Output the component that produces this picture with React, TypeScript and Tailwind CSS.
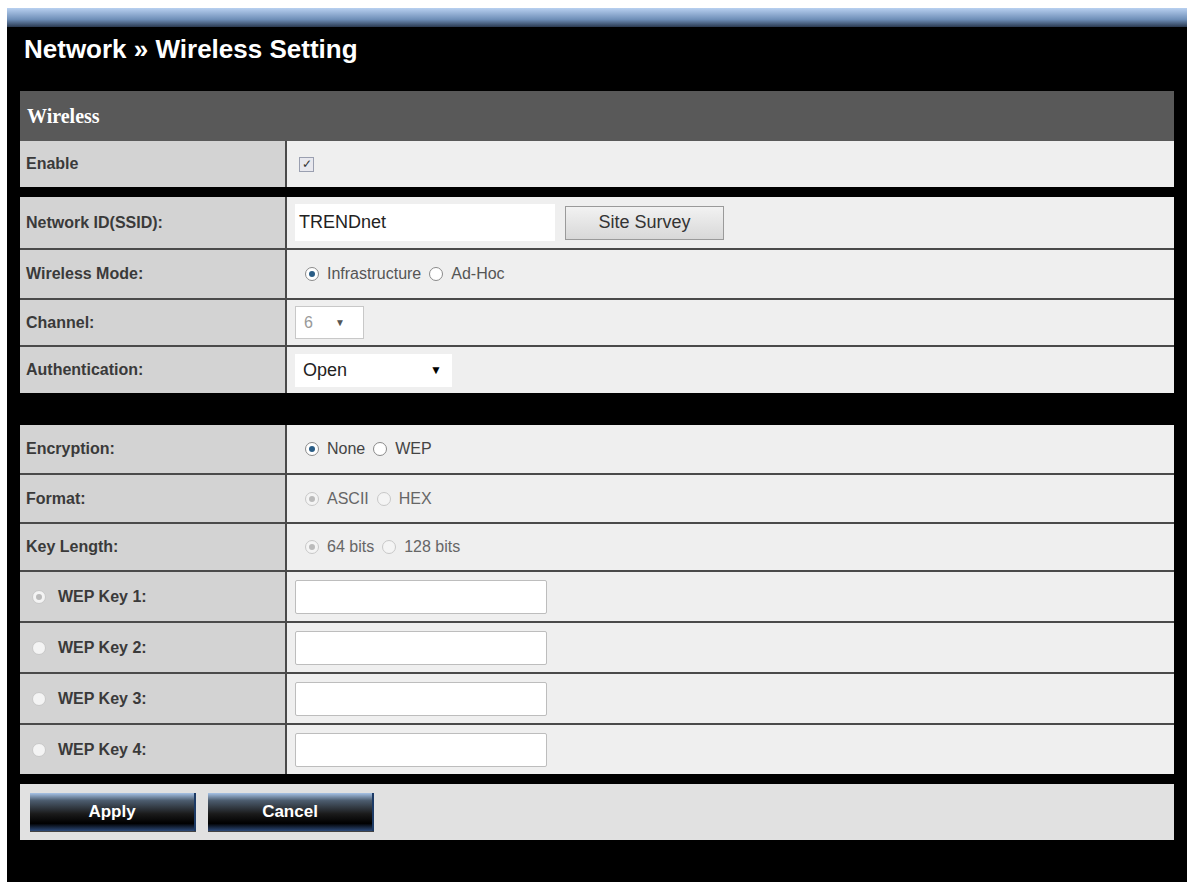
import React from "react";

const F = { fontFamily: '"Liberation Sans", Arial, sans-serif' };

function Radio({ on, dim }: { on?: boolean; dim?: boolean }) {
  return (
    <span className={`inline-flex items-center justify-center w-[14px] h-[14px] rounded-full border ${dim ? "border-[#c8c8c8] bg-[#f4f4f4]" : "border-[#8a8a8a] bg-white"}`}>
      {on && <span className={`w-[6px] h-[6px] rounded-full ${dim ? "bg-[#bbb]" : "bg-[#2a5d86]"}`} />}
    </span>
  );
}

function Row({ label, children, h, first }: { label: React.ReactNode; children?: React.ReactNode; h: number; first?: boolean }) {
  return (
    <div className={`flex ${first ? "" : "border-t-2 border-[#4a4a4a]"}`} style={{ height: h }}>
      <div className="w-[267px] bg-[#d3d3d3] border-r-2 border-[#4a4a4a] flex items-center pl-[6px] text-[16px] font-bold text-[#3a3a3a]">{label}</div>
      <div className="flex-1 bg-[#efefef] flex items-center pl-[8px] text-[16px] text-[#333]">{children}</div>
    </div>
  );
}

function Input() {
  return <div className="w-[252px] h-[34px] bg-white border border-[#bdbdbd] rounded-[2px]" />;
}

function Btn({ children }: { children: React.ReactNode }) {
  return (
    <div className="w-[166px] h-[38px] flex items-center justify-center text-white font-bold text-[17px] border-r-2 border-[#1d3b66] shadow-[0_1px_0_#444]" style={{ background: "linear-gradient(#a7c3e6 0%, #4c5c6e 20%, #1a1a1a 55%, #000 80%, #2c4a7a 100%)" }}>
      {children}
    </div>
  );
}

export default function App() {
  return (
    <div className="w-[1193px] h-[887px] bg-white pt-[8px] pl-[7px]" style={F}>
      <div className="w-[1180px] h-[874px] bg-black flex flex-col">
        <div className="h-[19px]" style={{ background: "linear-gradient(#b8d0f0, #6f8fb8 60%, #2a3950)" }} />
        <div className="h-[64px] pl-[17px] pt-[3px] text-white font-bold text-[26px]">Network » Wireless Setting</div>
        <div className="mx-[13px] flex flex-col">
          <div className="h-[50px] bg-[#595959] flex items-center pl-[7px] text-white font-bold text-[20px]" style={{ fontFamily: '"Liberation Serif", serif' }}>Wireless</div>
          <Row label="Enable" h={46} first>
            <span className="w-[15px] h-[15px] border border-[#9a9fb0] bg-[#e8e8ee] flex items-center justify-center text-[12px] text-[#333] ml-[4px]">✓</span>
          </Row>
          <div className="h-[10px] bg-black" />
          <Row label="Network ID(SSID):" h={51} first>
            <div className="w-[260px] h-[37px] bg-white flex items-center pl-[4px] text-[18px] text-[#222]">TRENDnet</div>
            <div className="ml-[10px] w-[159px] h-[34px] border border-[#9a9a9a] bg-gradient-to-b from-[#f2f2f2] to-[#d8d8d8] flex items-center justify-center text-[18px] text-[#333]">Site Survey</div>
          </Row>
          <Row label="Wireless Mode:" h={50}>
            <span className="ml-[10px] flex items-center gap-[8px] text-[#555]"><Radio on />Infrastructure <Radio /> Ad-Hoc</span>
          </Row>
          <Row label="Channel:" h={47}>
            <div className="w-[69px] h-[33px] bg-white border border-[#c8c8c8] flex items-center pl-[8px] text-[#999] gap-[22px]">6 <span className="text-[10px] text-[#555]">▼</span></div>
          </Row>
          <Row label="Authentication:" h={48}>
            <div className="w-[157px] h-[33px] bg-white flex items-center pl-[8px] text-[18px] text-[#222] justify-between pr-[10px]">Open <span className="text-[12px] text-black">▼</span></div>
          </Row>
          <div className="h-[32px] bg-black" />
          <Row label="Encryption:" h={48} first>
            <span className="ml-[10px] flex items-center gap-[8px] text-[#444]"><Radio on />None <Radio /> WEP</span>
          </Row>
          <Row label="Format:" h={49}>
            <span className="ml-[10px] flex items-center gap-[8px] text-[#666]"><Radio on dim />ASCII <Radio dim /> HEX</span>
          </Row>
          <Row label="Key Length:" h={48}>
            <span className="ml-[10px] flex items-center gap-[8px] text-[#666]"><Radio on dim />64 bits <Radio dim /> 128 bits</span>
          </Row>
          {[1, 2, 3, 4].map((n) => (
            <Row key={n} h={51} label={<span className="flex items-center gap-[12px] pl-[6px]"><Radio on={n === 1} dim />WEP Key {n}:</span>}>
              <Input />
            </Row>
          ))}
          <div className="h-[10px] bg-black" />
          <div className="h-[56px] bg-[#e1e1e1] flex items-center pl-[10px] gap-[12px]">
            <Btn>Apply</Btn>
            <Btn>Cancel</Btn>
          </div>
        </div>
      </div>
    </div>
  );
}
